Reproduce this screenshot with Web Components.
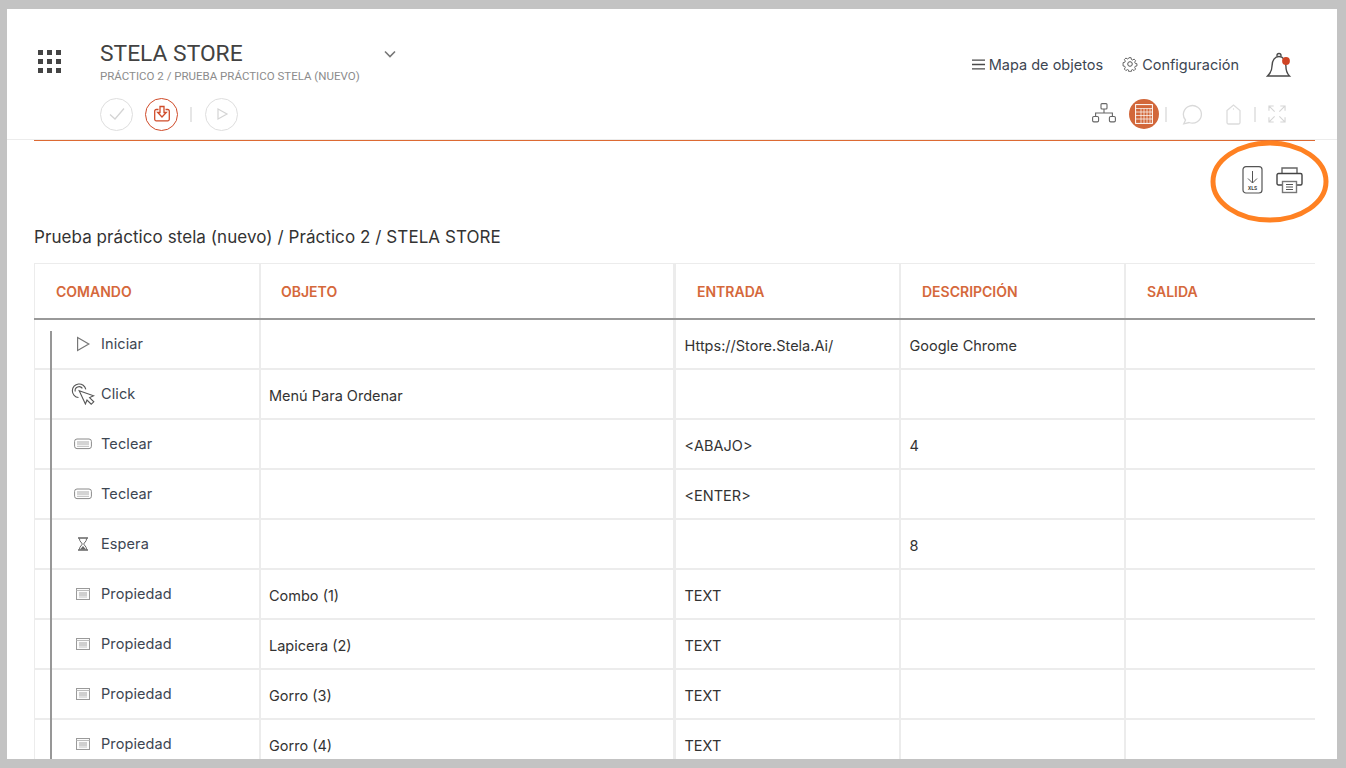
<!DOCTYPE html>
<html lang="es">
<head>
<meta charset="utf-8">
<title>Stela Store</title>
<style>
  html, body { margin: 0; height: 100%; overflow: hidden; }
  body {
    background: #c3c3c3;
    padding: 9px 9px 9px 7px;
    box-sizing: border-box;
    height: 768px;
    font-family: Inter, "Liberation Sans", sans-serif;
    color: #333;
  }
</style>
</head>
<body>
<app-frame>
  <stela-header title-text="STELA STORE" subtitle="PRÁCTICO 2 / PRUEBA PRÁCTICO STELA (NUEVO)"></stela-header>
  <export-bar></export-bar>
  <bread-crumb>Prueba práctico stela (nuevo) / Práctico 2 / STELA STORE</bread-crumb>
  <command-table>
    <command-row icon="play" command="Iniciar" entrada="Https://Store.Stela.Ai/" descripcion="Google Chrome"></command-row>
    <command-row icon="click" command="Click" objeto="Menú Para Ordenar"></command-row>
    <command-row icon="keyboard" command="Teclear" entrada="&lt;ABAJO&gt;" descripcion="4"></command-row>
    <command-row icon="keyboard" command="Teclear" entrada="&lt;ENTER&gt;"></command-row>
    <command-row icon="wait" command="Espera" descripcion="8"></command-row>
    <command-row icon="prop" command="Propiedad" objeto="Combo (1)" entrada="TEXT"></command-row>
    <command-row icon="prop" command="Propiedad" objeto="Lapicera (2)" entrada="TEXT"></command-row>
    <command-row icon="prop" command="Propiedad" objeto="Gorro (3)" entrada="TEXT"></command-row>
    <command-row icon="prop" command="Propiedad" objeto="Gorro (4)" entrada="TEXT"></command-row>
  </command-table>
</app-frame>

<script>
// Small line icons shared by the rows
const ICONS = {
  play: `<svg width="18" height="18" viewBox="0 0 18 18" fill="none" stroke="#777" stroke-width="1.2"><path d="M3.6 2.6 14.8 9 3.6 15.4Z"/></svg>`,
  click: `<svg width="24" height="22" viewBox="0 0 24 22" fill="none" stroke="#555" stroke-width="1.1"><path d="M7.500 14.500A6.800 6.800 0 1 1 14.800 6.400"/><path d="M4.200 8.500A4 4 0 0 1 11.400 5.400"/><path d="M8.200 7.800 22.600 12.800 18.600 14.600 22.800 18.800 20.200 21.200 16 17 14.400 21Z" fill="#fff"/></svg>`,
  keyboard: `<svg width="18" height="12" viewBox="0 0 18 12" fill="none" stroke="#8a8a8a"><rect x=".6" y="1" width="16.800" height="9.600" rx="2.400"/><path d="M3 4h12M3 6h12" stroke="#a0a0a0" stroke-width=".9"/><path d="M3 8.300h12" stroke="#bbb" stroke-width="1"/></svg>`,
  wait: `<svg width="12" height="14" viewBox="0 0 12 14" fill="none" stroke="#666"><path d="M1 1h10M1 13h10" stroke-width="1.3"/><path d="M2.400 1.400C2.400 5 5.200 5.600 5.200 7S2.400 9 2.400 12.600M9.600 1.400C9.600 5 6.800 5.600 6.800 7S9.600 9 9.600 12.600"/><path d="M3 12.400 6 9l3 3.400Z" fill="#666" stroke="none"/></svg>`,
  prop: `<svg width="16" height="14" viewBox="0 0 16 14" fill="none" stroke="#9a9a9a"><rect x="1.500" y="1.500" width="13" height="11" fill="#fbfbfb"/><path d="M1.500 3.500h13" stroke="#bbb"/><path d="M4 6h8M4 8h8" stroke="#999" stroke-width=".9"/><path d="M4 10h8" stroke="#bbb" stroke-width=".9"/></svg>`
};

const frameTemplate = document.createElement("template");
frameTemplate.innerHTML = `
  <style>
    :host {
      display: block;
      position: relative;
      background: #fff;
      height: 750px;
      overflow: hidden;
    }
    .mark {
      position: absolute;
      left: 1201px;
      top: 130px;
      pointer-events: none;
    }
  </style>
  <slot></slot>
  <svg class="mark" width="124" height="86" viewBox="0 0 124 86" fill="none">
    <ellipse cx="61.500" cy="42.5" rx="56.500" ry="38.500" stroke="#ff8122" stroke-width="5"/>
  </svg>
`;
class AppFrame extends HTMLElement {
  constructor() {
    super();
    this.attachShadow({ mode: "open" });
    this.shadowRoot.appendChild(frameTemplate.content.cloneNode(true));
  }
}
customElements.define("app-frame", AppFrame);

const headerTemplate = document.createElement("template");
headerTemplate.innerHTML = `
  <style>
    :host {
      display: block;
      height: 130px;
      border-bottom: 1px solid #ececec;
      position: relative;
      box-sizing: content-box;
    }
    :host::after {
      content: "";
      position: absolute;
      left: 27px;
      width: 1281px;
      bottom: -2px;
      height: 1px;
      background: #dd6a33;
    }
    .top {
      display: flex;
      height: 85px;
      box-sizing: border-box;
    }
    .apps {
      display: grid;
      grid-template-columns: repeat(3, 5px);
      grid-auto-rows: 5px;
      gap: 4px;
      margin: 41px 39px 0 31px;
      align-self: flex-start;
    }
    .apps i { background: #444; }
    .names { width: 281px; padding-top: 31px; }
    h1 {
      margin: 0;
      font: 400 22.800px/27px Roboto, sans-serif;
      color: #424242;
    }
    .names p {
      margin: 3px 0 0;
      font: 400 11.500px/13px Roboto, sans-serif;
      color: #8c8c8c;
    }
    .chevron { margin-top: 41px; }
    .links {
      margin-left: auto;
      display: flex;
      align-items: center;
      height: 30px;
      margin-top: 40px;
      padding-right: 45px;
      color: #3d4652;
      font-size: 14.500px;
    }
    .links span { display: flex; align-items: center; }
    .menu { gap: 4px; margin-right: 19px; }
    .config { gap: 4px; margin-right: 27px; }
    .bell { display: block; width: 26px; height: 26px; }
    .bottom {
      display: flex;
      align-items: center;
      height: 40px;
      padding: 0 51px 0 93px;
    }
    .round {
      box-sizing: border-box;
      width: 33px;
      height: 33px;
      border: 1.500px solid #dedede;
      border-radius: 50%;
      display: flex;
      align-items: center;
      justify-content: center;
    }
    .round.on { border-color: #cf4a28; margin-left: 12px; }
    .sep { width: 2px; height: 15px; background: #e6e6e6; }
    .left-sep { margin: 0 13px 0 12px; }
    .views { margin-left: auto; display: flex; align-items: center; }
    .tree { margin-top: -2px; }
    .table-on {
      width: 30px;
      height: 30px;
      border-radius: 50%;
      background: #d2673a;
      display: flex;
      align-items: center;
      justify-content: center;
      margin: 0 6px 0 13px;
    }
    .comment { margin: 0 23px 0 15px; }
    .tag { margin-right: 13px; }
    .expand { margin-left: 12px; }
  </style>
  <div class="top">
    <div class="apps"><i></i><i></i><i></i><i></i><i></i><i></i><i></i><i></i><i></i></div>
    <div class="names"><h1 id="title"></h1><p id="subtitle"></p></div>
    <svg class="chevron" width="18" height="10" viewBox="0 0 18 10" fill="none" stroke="#777" stroke-width="1.600"><path d="M4 1.500 9 6.500 14 1.500"/></svg>
    <div class="links">
      <span class="menu">
        <svg width="13" height="11" viewBox="0 0 13 11" stroke="#4a4a4a" stroke-width="1.300"><path d="M0 1.200h13M0 5.500h13M0 9.800h13"/></svg>
        Mapa de objetos
      </span>
      <span class="config">
        <svg width="16" height="16" viewBox="0 0 16 16" fill="none" stroke="#555"><circle cx="8" cy="8" r="2.300"/><path d="M6.800 1h2.400l.4 2 1.200.6 1.800-1 1.600 1.700-1 1.700.5 1.200 2 .5v2.500l-2 .4-.5 1.200 1 1.800-1.700 1.700-1.700-1.100-1.200.5-.4 2H6.800l-.4-2-1.200-.5-1.800 1.100-1.700-1.700 1.100-1.800-.5-1.200-2-.4V6.500l2-.5.5-1.200-1-1.700 1.600-1.700 1.800 1 1.200-.6Z" transform="translate(.8 .8) scale(.9)"/></svg>
        Configuración
      </span>
      <svg class="bell" viewBox="0 0 26 26" fill="none" stroke="#4a4a4a" stroke-width="1.400"><path d="M1.500 25h22c-2.600-2.500-3.600-5.500-3.600-10 0-5.500-2.800-9.500-6.900-9.500s-7 4-7 9.500c0 4.500-1.900 7.500-4.500 10Z"/><path d="M11 5.500V4.500a2 2 0 0 1 4 0v1"/><circle cx="20" cy="10" r="3.900" fill="#cf4424" stroke="none"/></svg>
    </div>
  </div>
  <div class="bottom">
    <div class="round"><svg width="18" height="14" viewBox="0 0 18 14" fill="none" stroke="#d4d4d4" stroke-width="1.300"><path d="M2 7.500 7 12 16 1.500"/></svg></div>
    <div class="round on"><svg width="18" height="18" viewBox="0 0 18 18" fill="none" stroke="#d04c2a" stroke-width="1.300"><path d="M5.500 4.500H3.200A1.500 1.500 0 0 0 1.700 6v8.300a1.500 1.500 0 0 0 1.500 1.500h11.600a1.500 1.500 0 0 0 1.500-1.500V6a1.500 1.500 0 0 0-1.500-1.500h-2.300"/><path d="M7 1.500h4v6h2.300L9 12 4.700 7.500H7Z"/></svg></div>
    <div class="sep left-sep"></div>
    <div class="round"><svg width="14" height="14" viewBox="0 0 14 14" fill="none" stroke="#d4d4d4" stroke-width="1.200"><path d="M3 2 12 7 3 12Z"/></svg></div>
    <div class="views">
      <svg class="tree" width="24" height="20" viewBox="0 0 24 20" fill="none" stroke="#666" stroke-width="1.100"><rect x="9" y=".6" width="6" height="5.400" rx="1"/><rect x=".6" y="13.500" width="6" height="5.400" rx="1.300"/><rect x="17.400" y="13.500" width="6" height="5.400" rx="1.300"/><path d="M12 6v4M3.600 13.500V10h16.800v3.500"/></svg>
      <div class="table-on"><svg width="18" height="20" viewBox="0 0 18 20" fill="none" stroke="#fff" stroke-width="1"><rect x=".6" y=".6" width="16.800" height="18.800"/><path d="M.6 4.500h16.800M6 4.500V19.400M.6 8h16.800M.6 11.500h16.800M.6 15h16.800M9 4.500V19.400M12 4.500V19.400M15 4.500V19.400" stroke-width=".7"/></svg></div>
      <div class="sep"></div>
      <svg class="comment" width="21" height="21" viewBox="0 0 21 21" fill="none" stroke="#d9d9d9" stroke-width="1.300"><path d="M3.500 16A9 8.800 0 1 1 7 18.500L1.800 19.800Z"/></svg>
      <svg class="tag" width="15" height="21" viewBox="0 0 15 21" fill="none" stroke="#dcdcdc" stroke-width="1.300"><path d="M1 6.500 7.500 1 14 6.500v12a1.500 1.500 0 0 1-1.500 1.500h-10A1.500 1.500 0 0 1 1 18.500Z"/><circle cx="7.500" cy="5" r=".7" fill="#dcdcdc" stroke="none"/></svg>
      <div class="sep"></div>
      <svg class="expand" width="18" height="18" viewBox="0 0 19 19" fill="none" stroke="#d6d6d6" stroke-width="1.200"><path d="M1 6V1h5M1 1l6 6M18 6V1h-5M18 1l-6 6M1 13v5h5M1 18l6-6M18 13v5h-5M18 18l-6-6"/></svg>
    </div>
  </div>
`;
class StelaHeader extends HTMLElement {
  constructor() {
    super();
    this.attachShadow({ mode: "open" });
    this.shadowRoot.appendChild(headerTemplate.content.cloneNode(true));
    this.$title = this.shadowRoot.querySelector("#title");
    this.$subtitle = this.shadowRoot.querySelector("#subtitle");
  }
  static get observedAttributes() {
    return ["title-text", "subtitle"];
  }
  attributeChangedCallback(name, oldValue, newValue) {
    if (name === "title-text") this.$title.textContent = newValue;
    if (name === "subtitle") this.$subtitle.textContent = newValue;
  }
}
customElements.define("stela-header", StelaHeader);

const exportTemplate = document.createElement("template");
exportTemplate.innerHTML = `
  <style>
    :host {
      display: flex;
      justify-content: flex-end;
      align-items: center;
      gap: 13px;
      height: 28px;
      margin-top: 26px;
      padding-right: 34px;
    }
    text { font: 700 5px Roboto, sans-serif; }
  </style>
  <svg width="21" height="28" viewBox="0 0 21 28" fill="none" stroke="#555" stroke-width="1.200">
    <rect x="1" y=".6" width="19" height="26.400" rx="3"/>
    <path d="M10.500 5v12M6 12.500l4.500 4.500 4.500-4.500" stroke-width="1"/>
    <text x="10.500" y="23.500" text-anchor="middle" fill="#444" stroke="none">XLS</text>
  </svg>
  <svg width="27" height="27" viewBox="0 0 27 27" fill="none" stroke="#444" stroke-width="1.400">
    <path d="M6 6.500V1h15v5.500" stroke="#666"/>
    <path d="M6 18H2.500A1.500 1.500 0 0 1 1 16.500v-8.500A1.500 1.500 0 0 1 2.500 6.500h22A1.500 1.500 0 0 1 26 8v8.500a1.500 1.500 0 0 1-1.500 1.500H21"/>
    <rect x="6.500" y="14.500" width="14" height="11" fill="#fff" stroke="#777"/>
    <path d="M10 17.500h7M10 20h7M10 22.500h7" stroke="#555" stroke-width="1"/>
  </svg>
`;
class ExportBar extends HTMLElement {
  constructor() {
    super();
    this.attachShadow({ mode: "open" });
    this.shadowRoot.appendChild(exportTemplate.content.cloneNode(true));
  }
}
customElements.define("export-bar", ExportBar);

const crumbTemplate = document.createElement("template");
crumbTemplate.innerHTML = `
  <style>
    :host {
      display: block;
      margin: 33px 0 16px 27px;
      font-size: 17px;
      letter-spacing: .07px;
      line-height: 20px;
      color: #333;
    }
  </style>
  <slot></slot>
`;
class BreadCrumb extends HTMLElement {
  constructor() {
    super();
    this.attachShadow({ mode: "open" });
    this.shadowRoot.appendChild(crumbTemplate.content.cloneNode(true));
  }
}
customElements.define("bread-crumb", BreadCrumb);

const tableTemplate = document.createElement("template");
tableTemplate.innerHTML = `
  <style>
    :host {
      display: block;
      position: relative;
      margin: 0 22px 0 27px;
      border-top: 1px solid #ececec;
    }
    .head {
      display: grid;
      grid-template-columns: 227px 415px 225px 225px 189px;
      height: 54px;
      border-bottom: 2px solid #999;
    }
    .head div {
      box-sizing: border-box;
      border-right: 2px solid #ececec;
      padding-left: 21px;
      display: flex;
      align-items: center;
      color: #d5683b;
      font-size: 14px;
      font-weight: 600;
    }
    .head div:first-child { border-left: 1px solid #ececec; }
    .head div:nth-child(2) { border-right-width: 3px; padding-left: 20px; }
    .head div:last-child { border-right: 0; }
    .trunk {
      position: absolute;
      left: 16px;
      top: 67px;
      bottom: 0;
      width: 2px;
      background: #979797;
    }
  </style>
  <div class="head">
    <div>COMANDO</div><div>OBJETO</div><div>ENTRADA</div><div>DESCRIPCIÓN</div><div>SALIDA</div>
  </div>
  <slot></slot>
  <div class="trunk"></div>
`;
class CommandTable extends HTMLElement {
  constructor() {
    super();
    this.attachShadow({ mode: "open" });
    this.shadowRoot.appendChild(tableTemplate.content.cloneNode(true));
  }
}
customElements.define("command-table", CommandTable);

const rowTemplate = document.createElement("template");
rowTemplate.innerHTML = `
  <style>
    :host {
      display: grid;
      grid-template-columns: 227px 415px 225px 225px 189px;
      height: 50px;
      box-sizing: border-box;
      border-bottom: 2px solid #ececec;
      font-size: 14.500px;
      color: #333;
    }
    .cell {
      box-sizing: border-box;
      border-right: 2px solid #ececec;
      padding: 2px 0 0 8.500px;
      display: flex;
      align-items: center;
    }
    .cell.obj { border-right-width: 3px; padding-left: 8px; }
    .cell:last-child { border-right: 0; }
    .cmd {
      border-left: 1px solid #ececec;
      padding: 0 0 1px 39px;
      gap: 9px;
      color: #3d4652;
      letter-spacing: .1px;
    }
    .icon {
      width: 18px;
      height: 24px;
      display: flex;
      align-items: center;
      justify-content: center;
      flex: none;
    }
    .icon svg { flex: none; }
  </style>
  <div class="cell cmd"><span class="icon"></span><span class="name"></span></div>
  <div class="cell obj"></div>
  <div class="cell ent"></div>
  <div class="cell desc"></div>
  <div class="cell out"></div>
`;
class CommandRow extends HTMLElement {
  constructor() {
    super();
    this.attachShadow({ mode: "open" });
    this.shadowRoot.appendChild(rowTemplate.content.cloneNode(true));
  }
  connectedCallback() {
    const root = this.shadowRoot;
    root.querySelector(".icon").innerHTML = ICONS[this.getAttribute("icon")] || "";
    root.querySelector(".name").textContent = this.getAttribute("command");
    root.querySelector(".obj").textContent = this.getAttribute("objeto") || "";
    root.querySelector(".ent").textContent = this.getAttribute("entrada") || "";
    root.querySelector(".desc").textContent = this.getAttribute("descripcion") || "";
  }
}
customElements.define("command-row", CommandRow);
</script>
</body>
</html>
